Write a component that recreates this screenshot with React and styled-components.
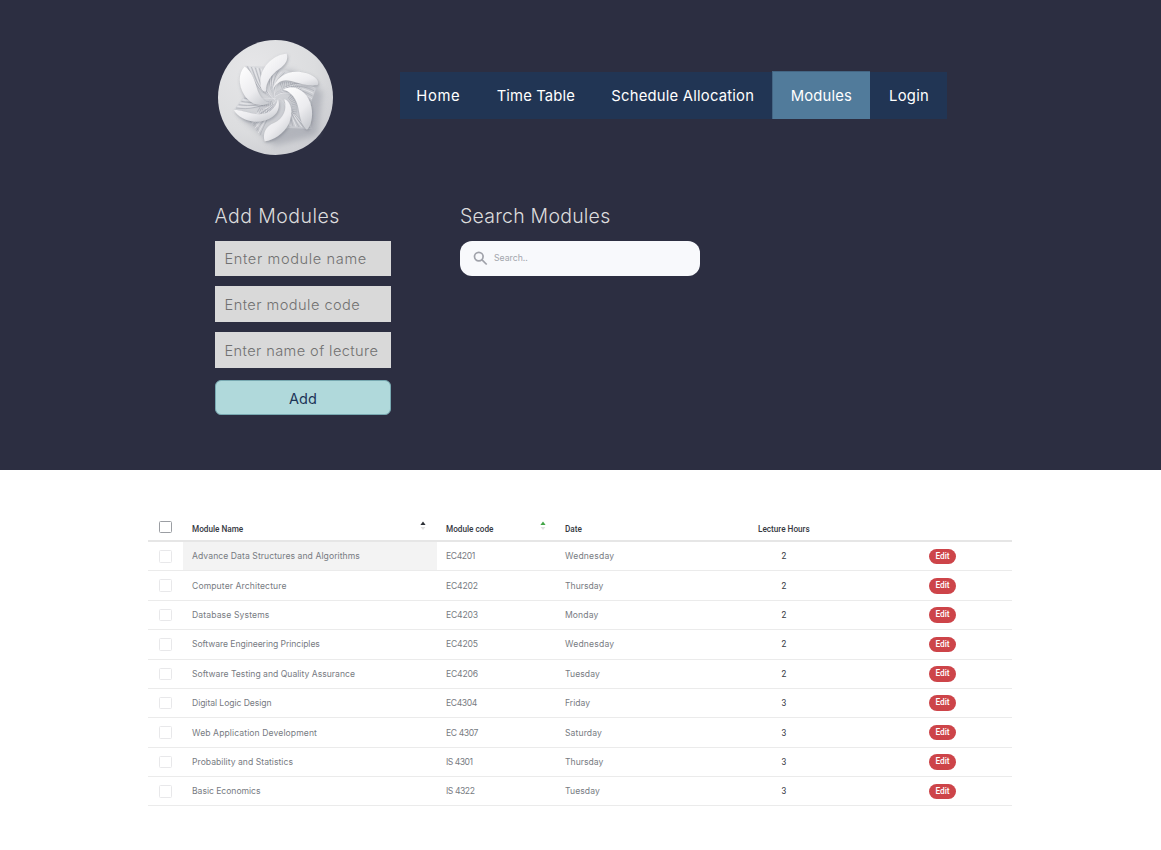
import React from "react";
import styled, { createGlobalStyle } from "styled-components";

const GlobalStyle = createGlobalStyle`
  *, *::before, *::after { box-sizing: border-box; }
  body {
    margin: 0;
    background: #fff;
    font-family: Inter, "Open Sans", sans-serif;
  }
`;

const Page = styled.div`
  width: 1161px;
  height: 850px;
  overflow: hidden;
`;

const Hero = styled.header`
  height: 470px;
  padding: 40px 0 0 214.5px;
  background: #2c2e41;
`;

const TopBar = styled.div`
  display: flex;
  align-items: flex-start;
  height: 160px;
`;

const Logo = styled.svg`
  width: 115px;
  height: 115px;
  margin: 0 67px 0 3.5px;
  flex: none;
`;

const Nav = styled.nav`
  display: flex;
  width: 547px;
  height: 48px;
  margin-top: 31px;
  background: linear-gradient(#2c2e41 1px, #213554 1px);
`;

const NavLink = styled.a`
  display: flex;
  flex: none;
  align-items: center;
  justify-content: flex-start;
  width: ${(p) => p.$width}px;
  height: 48px;
  padding-top: 1.5px;
  padding-left: ${(p) => p.$pad}px;
  background: ${(p) => (p.$active ? "#517b9b" : "transparent")};
  box-shadow: ${(p) => (p.$active ? "inset 0 1px #446684, inset 1px 0 #446684" : "none")};
  color: #fff;
  font-size: 14.8px;
  font-weight: 400;
  letter-spacing: ${(p) => p.$track || 0}px;
  white-space: nowrap;
`;

const Forms = styled.div`
  display: flex;
  gap: 69px;
`;

const Panel = styled.section`
  display: flex;
  flex-direction: column;
  width: ${(p) => p.$width}px;
`;

const Heading = styled.h2`
  height: 40.5px;
  margin: 0;
  color: #dcdcdd;
  font-size: 19.5px;
  font-weight: 300;
  line-height: 32px;
  letter-spacing: ${(p) => p.$track}px;
  white-space: nowrap;
`;

const Field = styled.div`
  height: 35.5px;
  margin-bottom: 10.4px;
  padding: 1.4px 0 0 10px;
  background: #d9d9d9;
  color: #717171;
  font-size: 14.6px;
  font-weight: 300;
  line-height: 35px;
  letter-spacing: ${(p) => p.$track}px;
  white-space: nowrap;
`;

const AddButton = styled.button`
  height: 35px;
  margin: 2px 0 0 0.5px;
  padding: 1.5px 0 0;
  border: 1px solid #78a9b1;
  border-radius: 6px;
  background: #b0d9db;
  color: #1d3557;
  font: 400 14.5px Inter, sans-serif;
`;

const SearchBox = styled.div`
  display: flex;
  align-items: center;
  height: 35.5px;
  padding-left: 13px;
  border-radius: 12px;
  background: #f8f9fc;
  color: #a3a6ad;
  font-size: 8.7px;
  font-weight: 400;
`;

const SearchIcon = styled.svg`
  width: 15px;
  height: 15px;
  margin-right: 6px;
`;

const Table = styled.div`
  width: 864px;
  margin: 45px 0 0 148px;
`;

const Row = styled.div`
  display: grid;
  grid-template-columns: 34.5px 254px 119px 193px 172px 1fr;
  height: 29.38px;
  border-bottom: 1px solid #ebebeb;
`;

const HeadRow = styled(Row)`
  height: 27px;
  border-bottom: 2px solid #e6e6e6;
`;

const Cell = styled.div`
  display: flex;
  align-items: center;
  padding-top: 0.3px;
  padding-left: 9.5px;
  background: ${(p) => (p.$selected ? "#f3f3f3" : "transparent")};
  color: #777b82;
  font-size: 8.6px;
  letter-spacing: ${(p) => p.$track || 0}px;
  white-space: nowrap;
`;

const CheckCell = styled(Cell)`
  padding-left: 11px;
`;

const HeadCell = styled(Cell)`
  justify-content: space-between;
  padding-top: 3px;
  padding-right: ${(p) => p.$right || 0}px;
  color: #35383f;
  font-family: Roboto, sans-serif;
  font-size: 8.2px;
  font-weight: 500;
`;

const HoursCell = styled(Cell)`
  padding-left: 33px;
  color: #35383f;
  font-family: Roboto, sans-serif;
`;

const EditCell = styled(Cell)`
  padding-left: 8.8px;
`;

const Check = styled.span`
  width: 13px;
  height: 12.5px;
  border: 1px solid ${(p) => (p.$strong ? "#9b9ea3" : "#e8e8ea")};
  border-radius: 1.5px;
  margin-top: ${(p) => (p.$strong ? -1 : 0)}px;
`;

const Pill = styled.button`
  width: 26.5px;
  height: 15.6px;
  padding: 0;
  border: 0;
  border-radius: 8px;
  background: #cd4449;
  color: #fff;
  font: 500 8.3px/15.6px Roboto, sans-serif;
`;

const SortIcon = styled.svg`
  width: 6px;
  height: 10px;
  margin-top: -7px;
`;

const navItems = [
  { label: "Home", width: 80, pad: 16.3, track: 0.65 },
  { label: "Time Table", width: 114.3, pad: 16.7, track: 0.13 },
  { label: "Schedule Allocation", width: 177.7, pad: 17, track: 0.22 },
  { label: "Modules", width: 98.5, pad: 18.7, track: 0.18 },
  { label: "Login", width: 76, pad: 18.5, track: 0.3 },
];

const modules = [
  ["Advance Data Structures and Algorithms", 0.07, "EC4201", -0.4, "Wednesday", 0.18, 2],
  ["Computer Architecture", 0.1, "EC4202", -0.2, "Thursday", 0, 2],
  ["Database Systems", 0.12, "EC4203", -0.2, "Monday", 0.1, 2],
  ["Software Engineering Principles", -0.06, "EC4205", -0.2, "Wednesday", 0.18, 2],
  ["Software Testing and Quality Assurance", 0.01, "EC4206", -0.2, "Tuesday", 0.08, 2],
  ["Digital Logic Design", -0.06, "EC4304", -0.4, "Friday", 0, 3],
  ["Web Application Development", 0.1, "EC 4307", -0.4, "Saturday", 0.1, 3],
  ["Probability and Statistics", 0.03, "IS 4301", -0.5, "Thursday", 0, 3],
  ["Basic Economics", -0.03, "IS 4322", -0.45, "Tuesday", 0.08, 3],
];

function Sort({ color }) {
  return (
    <SortIcon viewBox="0 0 6 10">
      <path d="M3 0.6 5.6 4H0.4Z" fill={color} />
      <path d="M3 9 5.4 6H0.6Z" fill="#e0e0e0" />
    </SortIcon>
  );
}

const ribs = [0, 1, 2, 3, 4, 5, 6, 7];

function FlowerLogo() {
  return (
    <Logo viewBox="24 30 345 345" aria-label="Logo">
      <defs>
        <radialGradient id="disc" cx="0.3" cy="0.25" r="0.9">
          <stop offset="0" stopColor="#e6e6e8" />
          <stop offset="0.6" stopColor="#dcdddf" />
          <stop offset="1" stopColor="#c9cacf" />
        </radialGradient>
        <linearGradient id="petal" x1="0" y1="0" x2="0.7" y2="1">
          <stop offset="0" stopColor="#ffffff" />
          <stop offset="0.65" stopColor="#ececef" />
          <stop offset="1" stopColor="#cdcfd4" />
        </linearGradient>
        <linearGradient id="shade" x1="0" y1="0" x2="1" y2="1">
          <stop offset="0" stopColor="#dedfe2" />
          <stop offset="1" stopColor="#c2c4ca" />
        </linearGradient>
        <filter id="soft" x="-30%" y="-30%" width="160%" height="160%">
          <feGaussianBlur stdDeviation="10" />
        </filter>
        <filter id="drop" x="-30%" y="-30%" width="160%" height="160%">
          <feDropShadow dx="2" dy="4" stdDeviation="4" floodColor="#656a77" floodOpacity="0.5" />
        </filter>
      </defs>
      <circle cx="196.5" cy="202.5" r="172.5" fill="url(#disc)" />
      <path d="M125 130 245 120 338 185 322 315 195 348 98 265Z" fill="#8f939e" opacity="0.5" filter="url(#soft)" />
      <path d="M106 107 208 112 245 128 322 166 300 225 304 297 235 294 164 325 130 272 72 238 112 185Z" fill="url(#shade)" />
      <g fill="none" strokeWidth="2">
        {ribs.map((i) => (
          <g key={i} stroke={i % 2 ? "#eeeef1" : "#a9acb4"}>
            <path d={`M${112 + i * 6} ${109 + i}C${128 + i * 5} ${140 + i * 2} ${137 + i * 4} ${184 + i} ${191 + i} ${205 + i}`} />
            <path d={`M${316 - i * 2} ${166 + i * 8}C${277 - i * 4} ${151 + i * 5} ${231 - i * 2} ${158 + i * 3} 193 ${195 + i}`} />
            <path d={`M${303 - i * 9} ${295 - i}C${263 - i * 4} ${274 - i * 4} ${241 - i * 2} ${224 - i * 2} 205 205`} />
            <path d={`M${150 - i * 5} ${316 - i * 7}C${163 - i * 2} ${281 - i * 5} ${190 - i} ${236 - i} 203 210`} />
            <path d={`M${78 + i * 4} ${234 - i * 5}C${117 + i * 2} ${240 - i * 5} ${156 + i} ${232 - i * 3} 198 205`} />
            <path d={`M${170 + i * 9} ${110 + i * 3}C${182 + i * 2} ${135 + i * 3} ${172 + i * 3} ${165 + i * 2} 193 200`} />
          </g>
        ))}
      </g>
      <g fill="none" stroke="#8b8f99" strokeWidth="15" strokeDasharray="2.5 3" opacity="0.4">
        <path d="M140 207C155 222 177 225 190 218" />
        <path d="M145 238C163 250 185 244 194 232" />
        <path d="M212 167C232 158 256 166 270 181" />
        <path d="M238 199C254 213 258 232 252 251" />
      </g>
      <g fill="url(#petal)" filter="url(#drop)">
        <path d="M104 110C85 127 84 166 103 195C120 221 147 234 180 218C153 213 144 188 137 163C130 137 117 116 104 110Z" />
        <path d="M72 240C83 263 123 281 158 273C198 263 213 239 204 207C196 242 166 257 137 252C108 247 87 239 72 240Z" />
        <path d="M164 334C157 310 168 288 192 279C220 266 233 239 223 207C246 216 250 250 236 282C221 312 191 331 164 334Z" />
        <path d="M220 178C260 160 295 188 304 230C311 261 301 290 291 299C276 289 271 266 266 238C261 207 245 187 220 178Z" />
        <path d="M187 180C198 137 242 115 290 130C319 139 329 156 323 165C296 170 270 160 244 153C216 145 200 157 187 180Z" />
        <path d="M230 71C195 73 157 104 152 145C149 174 157 188 168 184C166 158 184 134 206 118C228 102 235 89 230 71Z" />
      </g>
    </Logo>
  );
}

export default function App() {
  return (
    <Page>
      <GlobalStyle />
      <Hero>
        <TopBar>
          <FlowerLogo />
          <Nav>
            {navItems.map((n) => (
              <NavLink key={n.label} $width={n.width} $pad={n.pad} $track={n.track} $active={n.label === "Modules"}>
                {n.label}
              </NavLink>
            ))}
          </Nav>
        </TopBar>
        <Forms>
          <Panel $width={176.5}>
            <Heading $track={0.45}>Add Modules</Heading>
            <Field $track={0.62}>Enter module name</Field>
            <Field $track={0.45}>Enter module code</Field>
            <Field $track={0.4}>Enter name of lecture</Field>
            <AddButton>Add</AddButton>
          </Panel>
          <Panel $width={239.5}>
            <Heading $track={0.22}>Search Modules</Heading>
            <SearchBox>
              <SearchIcon viewBox="0 0 15 15" fill="none" stroke="#a0a2aa" strokeWidth="1.7">
                <circle cx="5.8" cy="5.6" r="4.3" />
                <path d="m8.8 8.6 4.9 4.9" />
              </SearchIcon>
              Search..
            </SearchBox>
          </Panel>
        </Forms>
      </Hero>
      <Table>
        <HeadRow>
          <CheckCell><Check $strong /></CheckCell>
          <HeadCell $right={10.5}>Module Name<Sort color="#2d3036" /></HeadCell>
          <HeadCell $right={10}>Module code<Sort color="#43a648" /></HeadCell>
          <HeadCell>Date</HeadCell>
          <HeadCell>Lecture Hours</HeadCell>
        </HeadRow>
        {modules.map(([name, nameTrack, code, codeTrack, day, dayTrack, hours], i) => (
          <Row key={name}>
            <CheckCell><Check /></CheckCell>
            <Cell $selected={i === 0} $track={nameTrack}>{name}</Cell>
            <Cell $track={codeTrack}>{code}</Cell>
            <Cell $track={dayTrack}>{day}</Cell>
            <HoursCell>{hours}</HoursCell>
            <EditCell><Pill>Edit</Pill></EditCell>
          </Row>
        ))}
      </Table>
    </Page>
  );
}
